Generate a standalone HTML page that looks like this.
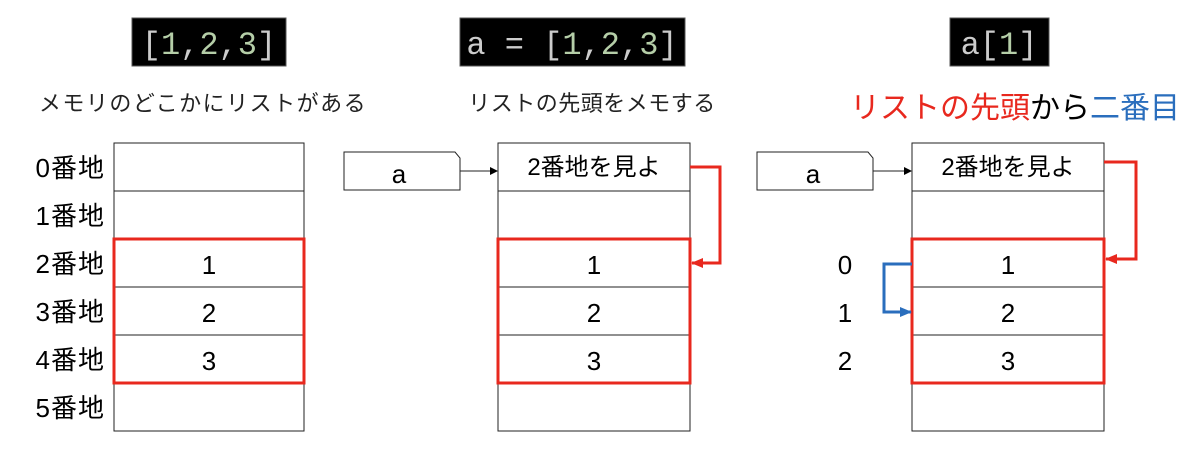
<!DOCTYPE html>
<html><head><meta charset="utf-8"><style>
html,body{margin:0;padding:0;background:#fff;}
svg{display:block;font-family:"Liberation Sans","Noto Sans CJK JP",sans-serif;}
.m{font-family:"Liberation Mono","DejaVu Sans Mono",monospace;}
</style></head><body>
<svg width="1200" height="454" viewBox="0 0 1200 454">
<defs>
<marker id="ak" markerWidth="8" markerHeight="8" refX="7" refY="4" orient="auto" markerUnits="userSpaceOnUse"><path d="M0,0 L8,4 L0,8z" fill="#000"/></marker>
<marker id="ar" markerWidth="12" markerHeight="10" refX="11" refY="5" orient="auto" markerUnits="userSpaceOnUse"><path d="M0,0 L12,5 L0,10z" fill="#e8281e"/></marker>
<marker id="ab" markerWidth="12" markerHeight="10" refX="11" refY="5" orient="auto" markerUnits="userSpaceOnUse"><path d="M0,0 L12,5 L0,10z" fill="#2a6ebd"/></marker>
</defs>
<rect x="132" y="18" width="154" height="48" fill="#000" stroke="#555"/>
<text x="209" y="54" text-anchor="middle" font-size="32" class="m" fill="#ccc">[<tspan fill="#b5cea8">1</tspan>,<tspan fill="#b5cea8">2</tspan>,<tspan fill="#b5cea8">3</tspan>]</text>
<rect x="460" y="18" width="225" height="48" fill="#000" stroke="#555"/>
<text x="572" y="54" text-anchor="middle" font-size="32" class="m" fill="#ccc">a = [<tspan fill="#b5cea8">1</tspan>,<tspan fill="#b5cea8">2</tspan>,<tspan fill="#b5cea8">3</tspan>]</text>
<rect x="950" y="18" width="99" height="48" fill="#000" stroke="#555"/>
<text x="999" y="54" text-anchor="middle" font-size="32" class="m" fill="#ccc">a[<tspan fill="#b5cea8">1</tspan>]</text>
<text x="203" y="111" text-anchor="middle" font-size="22" letter-spacing="1.5" fill="#222">メモリのどこかにリストがある</text>
<text x="592" y="111" text-anchor="middle" font-size="22" letter-spacing="0.5" fill="#222">リストの先頭をメモする</text>
<text x="1015" y="118" text-anchor="middle" font-size="30"><tspan fill="#e8281e">リストの先頭</tspan>から<tspan fill="#2a6ebd">二番目</tspan></text>
<g fill="none" stroke="#222" stroke-width="1">
<rect x="114" y="143" width="190" height="288"/>
<path d="M114 191H304M114 239H304M114 287H304M114 335H304M114 383H304"/>
<rect x="498" y="143" width="192" height="288"/>
<path d="M498 191H690M498 239H690M498 287H690M498 335H690M498 383H690"/>
<rect x="912" y="143" width="192" height="288"/>
<path d="M912 191H1104M912 239H1104M912 287H1104M912 335H1104M912 383H1104"/>
</g>
<g fill="none" stroke="#e8281e" stroke-width="3">
<rect x="114" y="239" width="190" height="144"/>
<rect x="498" y="239" width="192" height="144"/>
<rect x="912" y="239" width="192" height="144"/>
</g>
<g font-size="26" text-anchor="end" letter-spacing="1">
<text x="105" y="177">0番地</text><text x="105" y="225">1番地</text><text x="105" y="273">2番地</text>
<text x="105" y="321">3番地</text><text x="105" y="369">4番地</text><text x="105" y="417">5番地</text>
</g>
<g font-size="26" text-anchor="middle">
<text x="209" y="274">1</text><text x="209" y="322">2</text><text x="209" y="370">3</text>
<text x="594" y="274">1</text><text x="594" y="322">2</text><text x="594" y="370">3</text>
<text x="1008" y="274">1</text><text x="1008" y="322">2</text><text x="1008" y="370">3</text>
<text x="594" y="175" font-size="24">2番地を見よ</text>
<text x="1008" y="175" font-size="24">2番地を見よ</text>
<text x="845" y="274">0</text><text x="845" y="322">1</text><text x="845" y="370">2</text>
<text x="399" y="183">a</text><text x="813" y="183">a</text>
</g>
<path d="M344 152H455L460 158V190H344Z" fill="none" stroke="#222"/>
<path d="M757 152H868L873 158V190H757Z" fill="none" stroke="#222"/>
<path d="M460 171H497" stroke="#222" marker-end="url(#ak)"/>
<path d="M873 171H911" stroke="#222" marker-end="url(#ak)"/>
<path d="M690 167H720V263H692" fill="none" stroke="#e8281e" stroke-width="3" marker-end="url(#ar)"/>
<path d="M1104 162H1136V259H1106" fill="none" stroke="#e8281e" stroke-width="3" marker-end="url(#ar)"/>
<path d="M912 264H884V312H911" fill="none" stroke="#2a6ebd" stroke-width="3" marker-end="url(#ab)"/>
</svg>
</body></html>
